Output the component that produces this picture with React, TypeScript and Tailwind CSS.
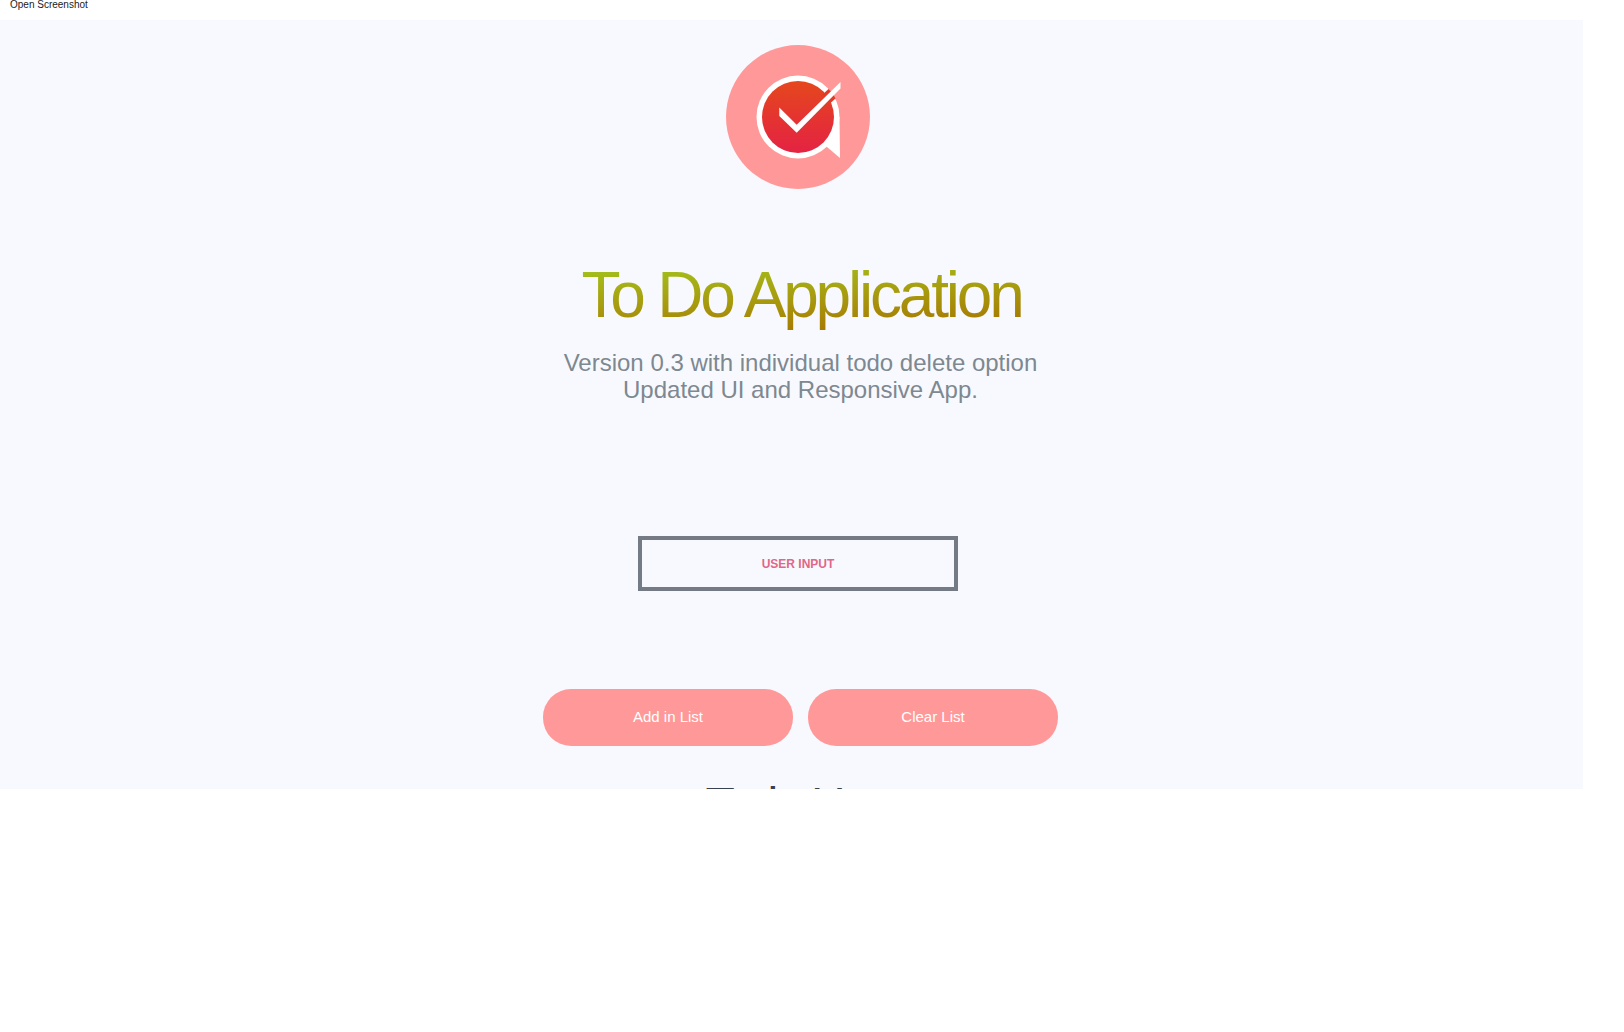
export default function App() {
  return (
    <div className="min-h-screen bg-white font-['Liberation_Sans',Arial,sans-serif]">
      <header className="flex h-5 items-start px-[10px]">
        <a href="#screenshot" className="text-[10px] leading-[10px] text-[#222222]">Open Screenshot</a>
      </header>
      <main className="mr-[41px] flex flex-col items-center bg-[#f8f9ff]">
        <svg viewBox="0 0 144 144" className="mt-[25px] ml-[13px] size-36" role="img" aria-label="To Do logo">
          <defs>
            <linearGradient id="disc" x1="0" y1="0" x2="0" y2="1">
              <stop offset="0" stopColor="#e5471d" />
              <stop offset="1" stopColor="#e42243" />
            </linearGradient>
          </defs>
          <circle cx="72" cy="72" r="72" fill="#ff9999" />
          <circle cx="72" cy="72" r="41.5" fill="#fff" />
          <path d="M72 72H113.500L114 113L101 102Z" fill="#fff" />
          <circle cx="72" cy="72" r="36" fill="url(#disc)" />
          <path d="M96 50L102.500 44L106.500 48L109.500 53.500L104.500 58Z" fill="#e23a27" />
          <path d="M53.300 62.500L70.700 79.700L114.500 37V43.500L70.700 87.800L53.300 71Z" fill="#fff" />
        </svg>
        <h1 className="mt-[70px] ml-[20px] bg-linear-177 from-[#a0ca1e] to-[#a57000] bg-clip-text text-[64px] leading-[72px] tracking-tighter text-transparent">
          To Do Application
        </h1>
        <p className="mt-[18px] ml-[18px] text-center text-2xl leading-[27px] text-[#7d8890]">
          Version 0.3 with individual todo delete option
          <br />
          Updated UI and Responsive App.
        </p>
        <input
          type="text"
          aria-label="User input"
          placeholder="USER INPUT"
          className="mt-[133px] ml-[13px] h-[55px] w-80 border-4 border-[#757b85] bg-transparent text-center text-xs font-bold text-[#e0668a] placeholder:text-[#e0668a] placeholder:opacity-100"
        />
        <div className="mt-[98px] ml-[18px] flex gap-[15px]">
          <button type="button" className="h-[57px] w-[250px] rounded-[28px] bg-[#ff9999] text-[15px] text-white">Add in List</button>
          <button type="button" className="h-[57px] w-[250px] rounded-[28px] bg-[#ff9999] text-[15px] text-white">Clear List</button>
        </div>
        <div className="mt-[35px] ml-[28px] h-2 overflow-hidden">
          <h2 className="text-5xl leading-[48px] tracking-tighter text-[#374151]">Todo Here</h2>
        </div>
      </main>
    </div>
  );
}
